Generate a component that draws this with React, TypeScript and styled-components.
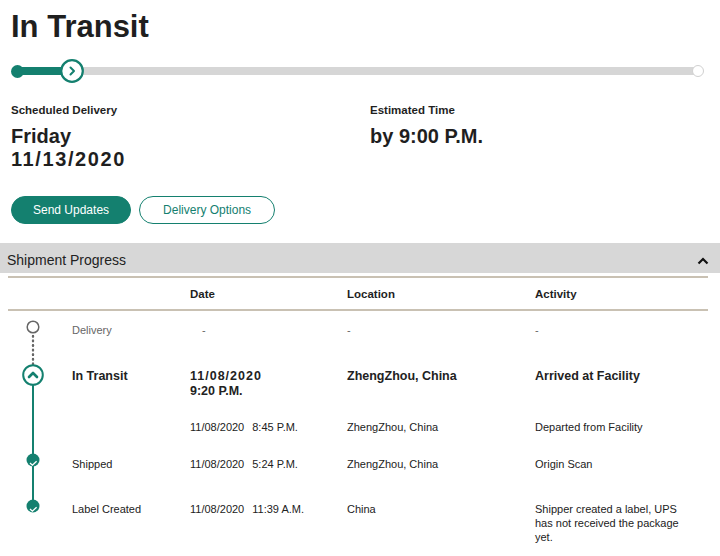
import styled, { createGlobalStyle } from 'styled-components';

const teal = '#14806f';
const tan = '#c9c1b3';
const cols = '64px 118px 157px 188px 160px';

const GlobalStyle = createGlobalStyle`
  body {
    margin: 0;
    background: #fff;
    font-family: 'Liberation Sans', Arial, sans-serif;
    color: #1f1f1f;
  }
`;

const Page = styled.div`
  width: 720px;
  padding-top: 9px;
  padding-bottom: 12px;
`;

const Title = styled.h1`
  margin: 0 0 0 11px;
  font-size: 31px;
  line-height: 36px;
  font-weight: 700;
`;

const Progress = styled.div`
  display: flex;
  align-items: center;
  height: 24px;
  margin: 14px 16px 0 11px;
`;

const StartDot = styled.span`
  width: 13px;
  height: 13px;
  border-radius: 50%;
  background: ${teal};
  flex: none;
`;

const Bar = styled.span<{ $done?: boolean }>`
  height: 8px;
  background: ${(p) => (p.$done ? teal : '#d6d6d6')};
  flex: ${(p) => (p.$done ? '0 0 40px' : '1')};
  margin: 0 -2px;
`;

const EndDot = styled.span`
  width: 10px;
  height: 10px;
  border-radius: 50%;
  border: 1.5px solid #d0d0d0;
  background: #fff;
  flex: none;
  position: relative;
`;

const Current = styled.svg`
  flex: none;
  position: relative;
`;

const Summary = styled.div`
  display: grid;
  grid-template-columns: 359px 1fr;
  margin: 20px 0 0 11px;
`;

const Label = styled.div`
  font-size: 11.5px;
  line-height: 14px;
  font-weight: 700;
`;

const Value = styled.div`
  margin-top: 8px;
  font-size: 20px;
  line-height: 23px;
  font-weight: 700;
`;

const Spaced = styled.span<{ $gap?: number }>`
  letter-spacing: ${(p) => p.$gap ?? 1.6}px;
`;

const Actions = styled.div`
  display: flex;
  gap: 8px;
  margin: 25px 0 0 11px;
`;

const Button = styled.button<{ $primary?: boolean }>`
  height: 28px;
  padding: 0 ${(p) => (p.$primary ? 21 : 23)}px;
  border-radius: 14px;
  border: 1px solid ${teal};
  background: ${(p) => (p.$primary ? teal : '#fff')};
  color: ${(p) => (p.$primary ? '#fff' : teal)};
  font-family: inherit;
  font-size: 12px;
  cursor: pointer;
`;

const SectionBar = styled.div`
  margin-top: 19px;
  height: 30px;
  box-sizing: border-box;
  background: #d7d7d7;
  display: flex;
  align-items: center;
  justify-content: space-between;
  padding: 4px 11px 0 7px;
  font-size: 14px;
  color: #222;
`;

const Table = styled.div`
  margin: 3px 12px 0 8px;
  border-top: 2px solid ${tan};
`;

const HeadRow = styled.div`
  display: grid;
  grid-template-columns: ${cols};
  align-items: center;
  height: 31px;
  border-bottom: 2px solid ${tan};
  font-size: 11.5px;
  font-weight: 700;
`;

const Row = styled.div<{ $after: number }>`
  display: grid;
  grid-template-columns: ${cols};
  padding: 12px 0 ${(p) => p.$after}px;
  font-size: 11px;
  line-height: 14px;
`;

const Cell = styled.div<{ $bold?: boolean; $muted?: boolean; $indent?: number }>`
  font-weight: ${(p) => (p.$bold ? 700 : 400)};
  font-size: ${(p) => (p.$bold ? '12.5px' : '11px')};
  line-height: ${(p) => (p.$bold ? '15px' : '14px')};
  padding-top: ${(p) => (p.$bold ? 2 : 0)}px;
  color: ${(p) => (p.$muted ? '#666' : '#222')};
  padding-left: ${(p) => p.$indent ?? 0}px;
`;

const Time = styled.span`
  margin-left: 8px;
`;

const NodeCell = styled.div`
  position: relative;
`;

const Rail = styled.span<{ $top: number; $bottom: number; $dotted?: boolean }>`
  position: absolute;
  top: ${(p) => p.$top}px;
  bottom: ${(p) => p.$bottom}px;
  left: ${(p) => (p.$dotted ? 23 : 24)}px;
  width: ${(p) => (p.$dotted ? 4 : 2)}px;
  background: ${(p) =>
    p.$dotted
      ? 'radial-gradient(circle, #666 1.1px, transparent 1.6px) center top / 4px 4.6px repeat-y'
      : teal};
`;

const NodeIcon = styled.svg<{ $offset: number; $size: number }>`
  display: block;
  position: relative;
  z-index: 1;
  margin-left: ${(p) => 25 - p.$size / 2}px;
  margin-top: ${(p) => p.$offset - p.$size / 2}px;
`;

type Kind = 'pending' | 'current' | 'done';

function Node({ kind, offset }: { kind: Kind; offset: number }) {
  if (kind === 'pending') {
    return (
      <NodeIcon $offset={offset} $size={14} width="14" height="14" viewBox="0 0 14 14">
        <circle cx="7" cy="7" r="5.8" fill="#fff" stroke="#666" strokeWidth="1.5" />
      </NodeIcon>
    );
  }
  if (kind === 'current') {
    return (
      <NodeIcon $offset={offset} $size={22} width="22" height="22" viewBox="0 0 22 22">
        <circle cx="11" cy="11" r="9.8" fill="#fff" stroke={teal} strokeWidth="2" />
        <polyline points="7,13 11,9 15,13" fill="none" stroke={teal} strokeWidth="2.6" strokeLinecap="round" strokeLinejoin="round" />
      </NodeIcon>
    );
  }
  return (
    <NodeIcon $offset={offset} $size={14} width="14" height="14" viewBox="0 0 14 14">
      <circle cx="7" cy="7" r="6.5" fill={teal} />
      <polyline points="4,10 6.4,12.2 10.6,8.2" fill="none" stroke="#fff" strokeWidth="1.3" />
    </NodeIcon>
  );
}

export default function App() {
  return (
    <Page>
      <GlobalStyle />
      <Title>In Transit</Title>

      <Progress>
        <StartDot />
        <Bar $done />
        <Current width="24" height="24" viewBox="0 0 24 24">
          <circle cx="12" cy="12" r="10.8" fill="#fff" stroke={teal} strokeWidth="2.2" />
          <polyline points="10.5,8.5 14,12 10.5,15.5" fill="none" stroke={teal} strokeWidth="2" strokeLinecap="round" strokeLinejoin="round" />
        </Current>
        <Bar />
        <EndDot />
      </Progress>

      <Summary>
        <div>
          <Label>Scheduled Delivery</Label>
          <Value>
            Friday
            <br />
            <Spaced>11/13/2020</Spaced>
          </Value>
        </div>
        <div>
          <Label>Estimated Time</Label>
          <Value>by 9:00 P.M.</Value>
        </div>
      </Summary>

      <Actions>
        <Button $primary>Send Updates</Button>
        <Button>Delivery Options</Button>
      </Actions>

      <SectionBar>
        <span>Shipment Progress</span>
        <svg width="12" height="9" viewBox="0 0 12 9">
          <polyline points="1.5,7.5 6,3 10.5,7.5" fill="none" stroke="#111" strokeWidth="2.2" />
        </svg>
      </SectionBar>

      <Table>
        <HeadRow>
          <span />
          <span />
          <span>Date</span>
          <span>Location</span>
          <span>Activity</span>
        </HeadRow>

        <Row $after={18}>
          <NodeCell>
            <Rail $dotted $top={11} $bottom={-29} />
            <Node kind="pending" offset={4} />
          </NodeCell>
          <Cell $muted>Delivery</Cell>
          <Cell $muted $indent={12}>-</Cell>
          <Cell $muted>-</Cell>
          <Cell $muted>-</Cell>
        </Row>

        <Row $after={9}>
          <NodeCell>
            <Rail $top={9} $bottom={-9} />
            <Node kind="current" offset={8} />
          </NodeCell>
          <Cell $bold>In Transit</Cell>
          <Cell $bold>
            <Spaced $gap={1}>11/08/2020</Spaced>
            <br />
            9:20 P.M.
          </Cell>
          <Cell $bold>ZhengZhou, China</Cell>
          <Cell $bold>Arrived at Facility</Cell>
        </Row>

        <Row $after={11}>
          <NodeCell>
            <Rail $top={-12} $bottom={-11} />
          </NodeCell>
          <Cell />
          <Cell>
            11/08/2020<Time>8:45 P.M.</Time>
          </Cell>
          <Cell>ZhengZhou, China</Cell>
          <Cell>Departed from Facility</Cell>
        </Row>

        <Row $after={19}>
          <NodeCell>
            <Rail $top={-12} $bottom={-35} />
            <Node kind="done" offset={3} />
          </NodeCell>
          <Cell>Shipped</Cell>
          <Cell>
            11/08/2020<Time>5:24 P.M.</Time>
          </Cell>
          <Cell>ZhengZhou, China</Cell>
          <Cell>Origin Scan</Cell>
        </Row>

        <Row $after={10}>
          <NodeCell>
            <Node kind="done" offset={4} />
          </NodeCell>
          <Cell>Label Created</Cell>
          <Cell>
            11/08/2020<Time>11:39 A.M.</Time>
          </Cell>
          <Cell>China</Cell>
          <Cell>Shipper created a label, UPS has not received the package yet.</Cell>
        </Row>
      </Table>
    </Page>
  );
}
